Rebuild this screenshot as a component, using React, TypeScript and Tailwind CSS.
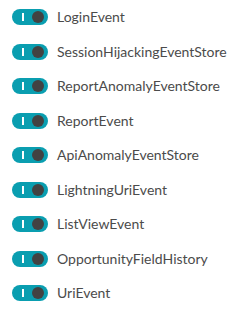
import React from "react";

const items = [
  "LoginEvent",
  "SessionHijackingEventStore",
  "ReportAnomalyEventStore",
  "ReportEvent",
  "ApiAnomalyEventStore",
  "LightningUriEvent",
  "ListViewEvent",
  "OpportunityFieldHistory",
  "UriEvent",
];

function Toggle() {
  return (
    <div className="relative w-[36px] h-[16px] rounded-full bg-[#0a9eb0] shrink-0">
      <div className="absolute left-[10px] top-[4px] w-[2px] h-[8px] bg-white" />
      <div className="absolute right-[4px] top-[2px] w-[12px] h-[12px] rounded-full bg-[#424242]" />
    </div>
  );
}

export default function App() {
  return (
    <div className="w-[240px] h-[322px] bg-white" style={{ fontFamily: 'Lato, sans-serif' }}>
      {items.map((t) => (
        <div key={t} className="flex items-center h-[34.5px] pl-[12px] gap-[9px]">
          <Toggle />
          <span className="text-[14px] text-[#4b4b4b] leading-none">{t}</span>
        </div>
      ))}
    </div>
  );
}
